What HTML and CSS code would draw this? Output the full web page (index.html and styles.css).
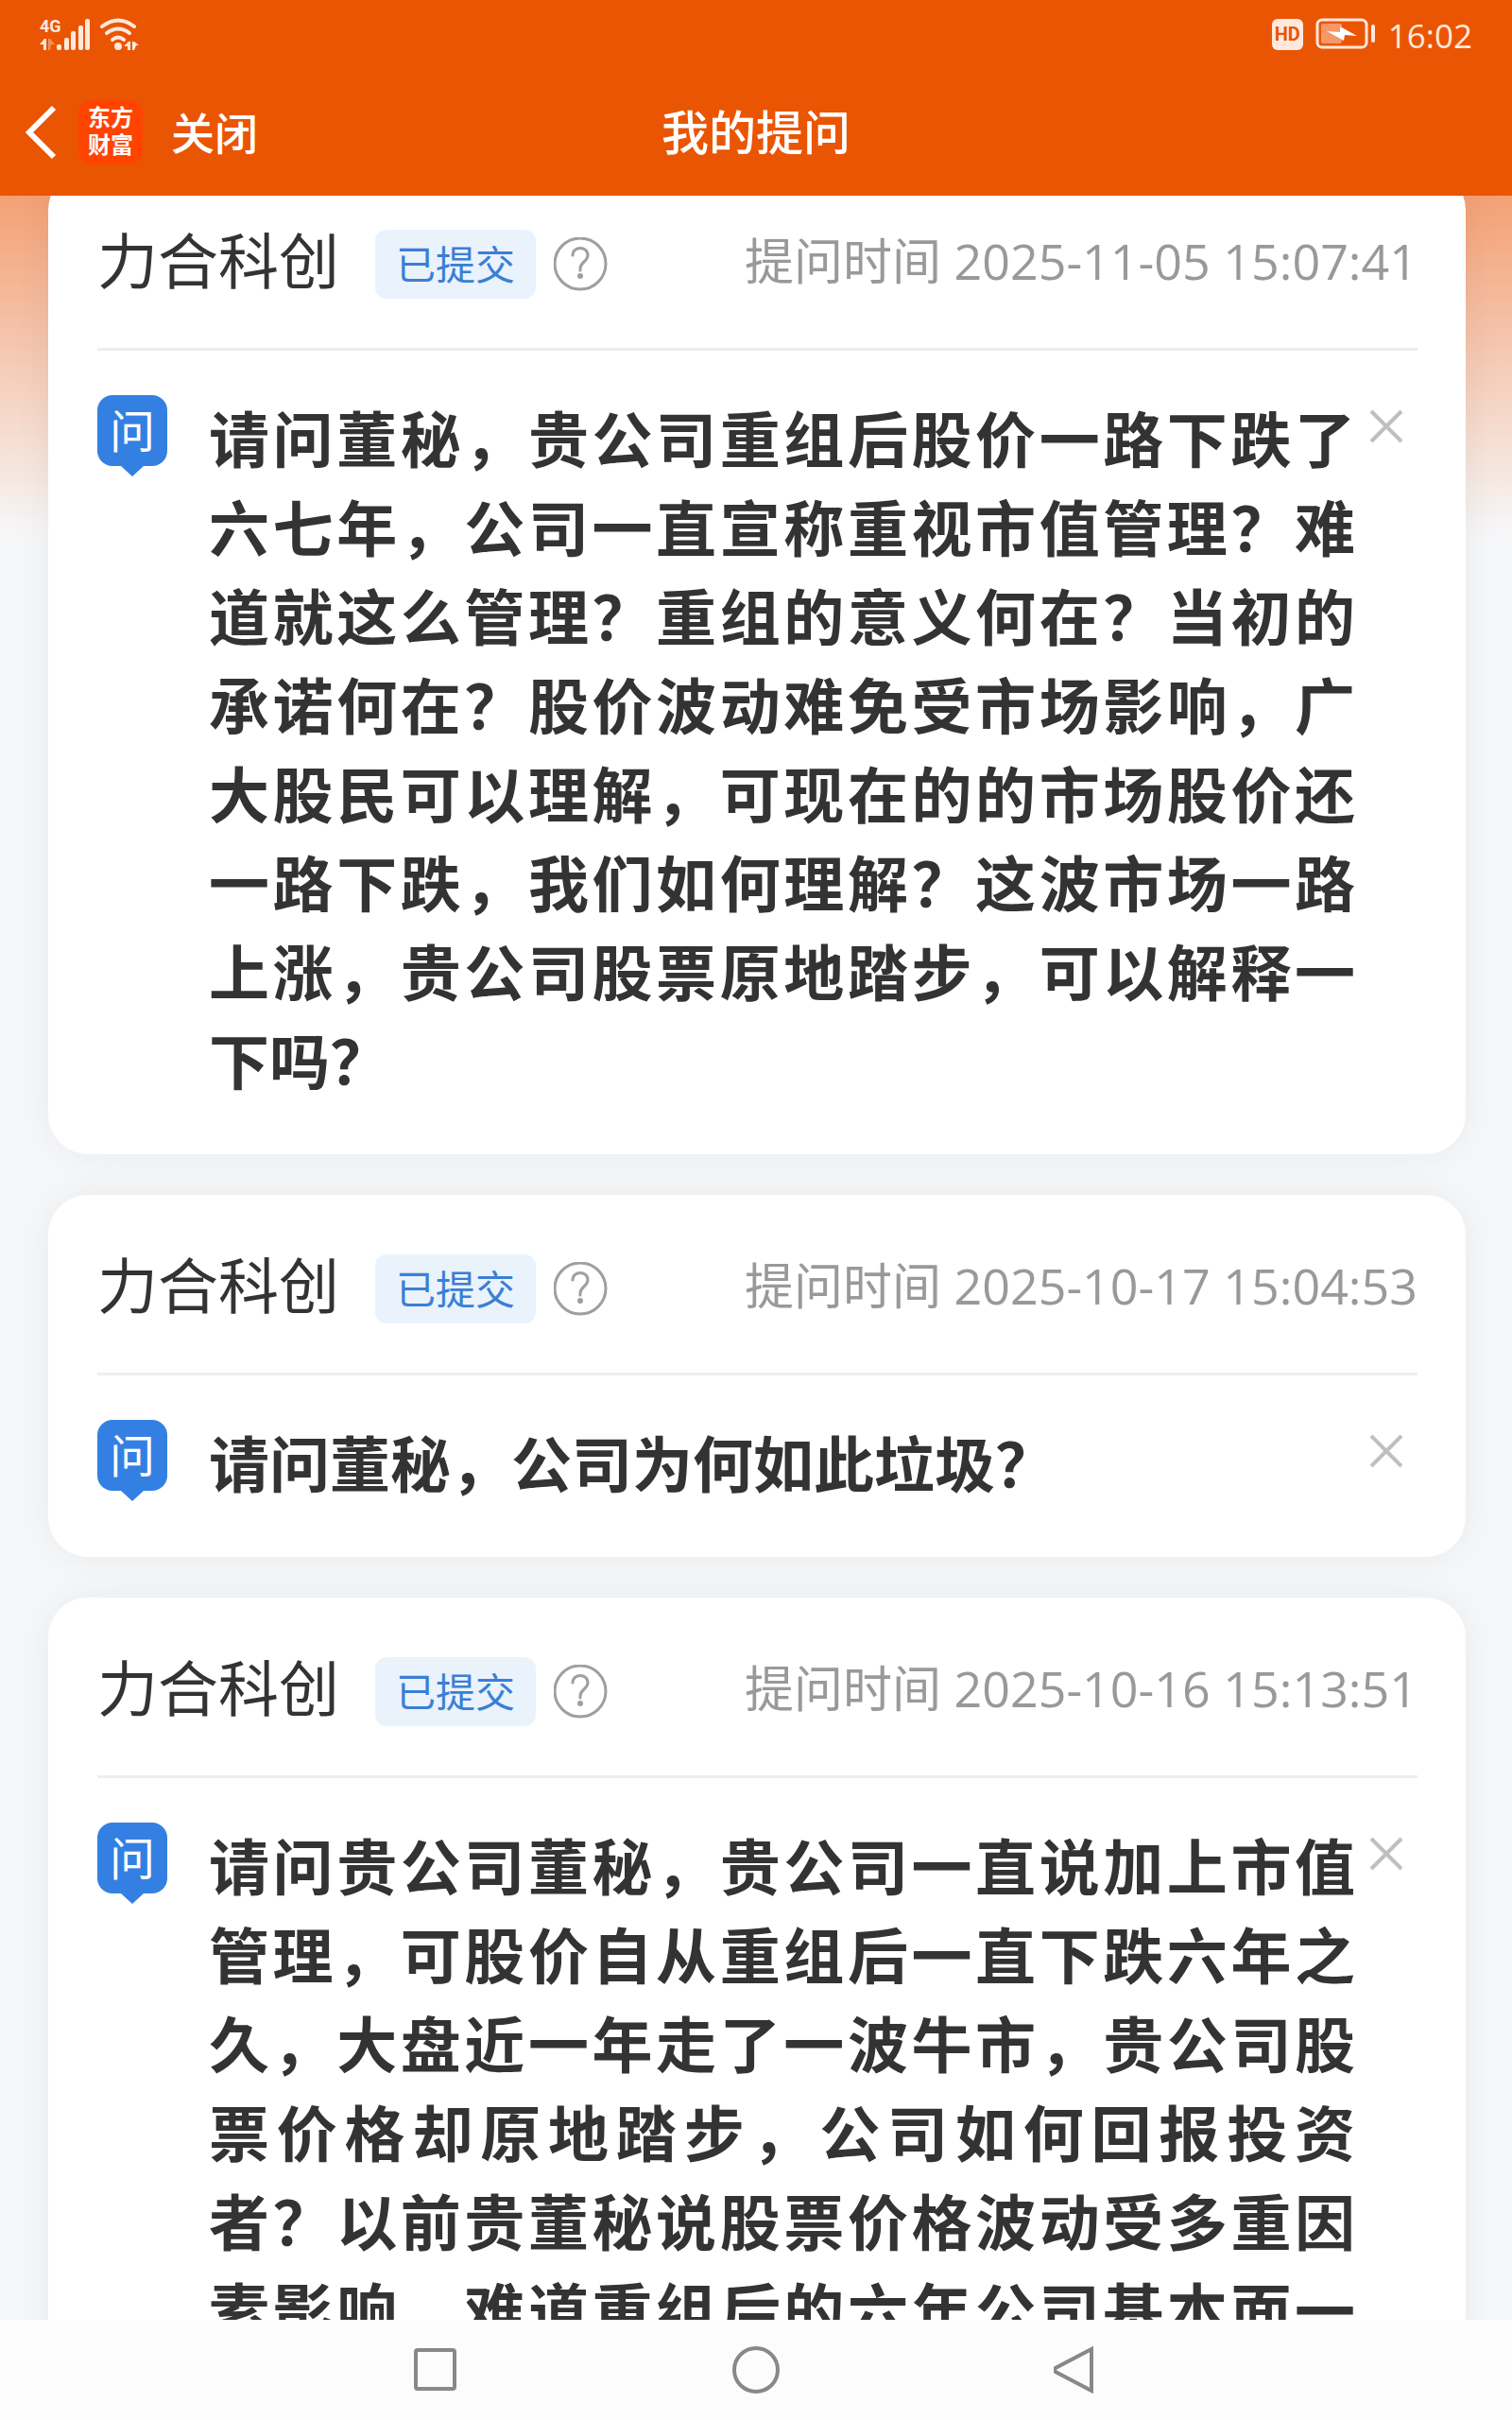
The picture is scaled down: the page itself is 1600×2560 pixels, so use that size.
FILE: index.html
```html
<!DOCTYPE html>
<html lang="zh-CN">
<head>
  <meta charset="UTF-8" />
  <meta name="viewport" content="width=device-width, initial-scale=1.0"/>
  <title>我的提问</title>
  <link rel="stylesheet" href="styles.css">
</head>
<body>
  <header class="topbar">
    <div class="status">
      <svg class="signal" width="106" height="44" viewBox="0 -6 106 44" fill="#ffe9dc">
        <text x="0" y="14" class="net">4G</text>
        <path d="M0 27l5-6h2v12H4v-6z"/>
        <path d="M9 21h2l5 6h-4l-1 6H9z" opacity=".4"/>
        <rect x="18" y="27" width="5" height="6" rx="2"/>
        <rect x="26" y="20" width="5" height="13" rx="2"/>
        <rect x="33" y="13" width="5" height="20" rx="2"/>
        <rect x="41" y="7" width="5" height="26" rx="2"/>
        <rect x="48" y="0" width="5" height="33" rx="2"/>
        <g fill="none" stroke="#ffe9dc" stroke-width="4" stroke-linecap="round">
          <path d="M66 8q17-13 34 0"/>
          <path d="M71 15q12-9 24 0"/>
          <path d="M77 22q6-5 12 0"/>
        </g>
        <circle cx="83" cy="29" r="4"/>
        <path d="M89 29l5-5h2v9h-3v-4zM98 24h2l5 4h-3l-2 5h-2z"/>
      </svg>
      <div class="status-right">
        <span class="hd">HD</span>
        <svg width="64" height="34" viewBox="0 0 64 34">
          <rect x="2" y="2" width="52" height="29" rx="5" fill="none" stroke="#ffe9dc" stroke-width="3"/>
          <rect x="6" y="6" width="22" height="21" rx="2" fill="#f59766"/>
          <path d="M12 14l14 1V9l18 10-13-1-1 6z" fill="#ffffff"/>
          <rect x="59" y="7" width="4" height="19" rx="2" fill="#ffe9dc"/>
        </svg>
        <span class="clock">16:02</span>
      </div>
    </div>
    <div class="nav">
      <div class="nav-left">
        <button class="back" aria-label="返回">
          <svg width="36" height="58" viewBox="0 0 36 58" fill="none" stroke="#fff" stroke-width="6">
            <path d="M31 3L5 29l26 26"/>
          </svg>
        </button>
        <span class="logo">东方<br>财富</span>
        <button class="close-page">关闭</button>
      </div>
      <h1>我的提问</h1>
    </div>
  </header>

  <main>
    <div class="list">
      <section class="card">
        <div class="card-head">
          <h2>力合科创</h2>
          <span class="badge">已提交</span>
          <button class="help" aria-label="说明"><svg viewBox="0 0 57 57"><use href="#i-help"/></svg></button>
          <time>提问时间 2025-11-05 15:07:41</time>
        </div>
        <div class="card-body">
          <span class="ask">问</span>
          <p>请问董秘，贵公司重组后股价一路下跌了六七年，公司一直宣称重视市值管理？难道就这么管理？重组的意义何在？当初的承诺何在？股价波动难免受市场影响，广大股民可以理解，可现在的的市场股价还一路下跌，我们如何理解？这波市场一路上涨，贵公司股票原地踏步，可以解释一下吗？</p>
          <button class="del" aria-label="删除"><svg viewBox="0 0 36 36"><use href="#i-del"/></svg></button>
        </div>
      </section>

      <section class="card">
        <div class="card-head">
          <h2>力合科创</h2>
          <span class="badge">已提交</span>
          <button class="help" aria-label="说明"><svg viewBox="0 0 57 57"><use href="#i-help"/></svg></button>
          <time>提问时间 2025-10-17 15:04:53</time>
        </div>
        <div class="card-body">
          <span class="ask">问</span>
          <p>请问董秘，公司为何如此垃圾？</p>
          <button class="del" aria-label="删除"><svg viewBox="0 0 36 36"><use href="#i-del"/></svg></button>
        </div>
      </section>

      <section class="card">
        <div class="card-head">
          <h2>力合科创</h2>
          <span class="badge">已提交</span>
          <button class="help" aria-label="说明"><svg viewBox="0 0 57 57"><use href="#i-help"/></svg></button>
          <time>提问时间 2025-10-16 15:13:51</time>
        </div>
        <div class="card-body">
          <span class="ask">问</span>
          <p>请问贵公司董秘，贵公司一直说加上市值管理，可股价自从重组后一直下跌六年之久，大盘近一年走了一波牛市，贵公司股票价格却原地踏步，公司如何回报投资者？以前贵董秘说股票价格波动受多重因素影响，难道重组后的六年公司基本面一直</p>
          <button class="del" aria-label="删除"><svg viewBox="0 0 36 36"><use href="#i-del"/></svg></button>
        </div>
      </section>
    </div>
  </main>

  <footer class="sysbar">
    <button aria-label="最近任务">
      <svg viewBox="0 0 50 50"><rect x="5" y="4" width="41" height="41" rx="2"/></svg>
    </button>
    <button aria-label="主页">
      <svg viewBox="0 0 50 50"><circle cx="25" cy="25" r="23"/></svg>
    </button>
    <button aria-label="返回">
      <svg viewBox="0 0 50 50"><path d="M40 3v44L2 27q-2-2 0-4z"/></svg>
    </button>
  </footer>

  <svg class="defs" aria-hidden="true">
    <symbol id="i-help" viewBox="0 0 57 57">
      <g fill="none" stroke="#9f9f9f" stroke-width="3">
        <circle cx="28" cy="28" r="27"/>
        <path d="M20 19c0-10 16-10 16 0 0 7-8 7-8 14v2" stroke-linecap="round"/>
      </g>
      <circle cx="28" cy="41" r="3" fill="#9f9f9f"/>
    </symbol>
    <symbol id="i-del" viewBox="0 0 36 36">
      <path d="M2 2l32 32M34 2L2 34" stroke="#bfbfbf" stroke-width="4"/>
    </symbol>
  </svg>
</body>
</html>
```
FILE: styles.css
```css
* {
  box-sizing: border-box;
}
body {
  margin: 0;
  height: 100vh;
  display: flex;
  flex-direction: column;
  overflow: hidden;
  background: #f6f7f9;
  color: #333;
  font-family: "Open Sans", "Noto Sans CJK SC", sans-serif;
}
button {
  padding: 0;
  border: 0;
  background: none;
  color: inherit;
  font: inherit;
  cursor: pointer;
}
svg {
  display: block;
}
h1, h2, p {
  margin: 0;
}
.defs {
  position: absolute;
  width: 0;
  height: 0;
}

/* 顶部 */
.topbar {
  flex: none;
  background: #ea5504;
  color: #fff;
}
.status {
  display: flex;
  align-items: center;
  justify-content: space-between;
  height: 72px;
  padding: 0 42px;
}
.net {
  font: bold 18px "Roboto", sans-serif;
}
.status-right {
  display: flex;
  align-items: center;
  gap: 13px;
  color: #ffe9dc;
}
.hd {
  width: 33px;
  height: 33px;
  border-radius: 6px;
  background: #ffe9dc;
  color: #ea5504;
  font: bold 20px/33px "Roboto", sans-serif;
  text-align: center;
}
.clock {
  padding-top: 3px;
  font-size: 35px;
  line-height: 36px;
}
.nav {
  display: grid;
  grid-template-columns: 1fr auto 1fr;
  align-items: center;
  height: 135px;
  padding: 0 26px;
}
.nav h1 {
  font-size: 50px;
  font-weight: 500;
  line-height: 64px;
}
.nav-left {
  display: flex;
  align-items: center;
}
.logo {
  width: 68px;
  height: 68px;
  margin: 0 30px 0 21px;
  padding-top: 3px;
  border-radius: 14px;
  background: #ff4400;
  font-size: 24px;
  font-weight: 700;
  line-height: 29px;
  text-align: center;
}
.close-page {
  font-size: 46px;
  font-weight: 500;
  line-height: 64px;
}

/* 提问列表 */
main {
  flex: 1;
  min-height: 0;
  overflow: hidden;
  background: linear-gradient(#f4a074, #f6f7f9 360px);
}
.list {
  display: flex;
  flex-direction: column;
  gap: 43px;
  margin-top: -27px;
  padding: 0 49px 0 51px;
}
.card {
  padding: 52px 51px 51px 52px;
  border-radius: 42px;
  background: #fff;
  box-shadow: 0 0 40px rgba(0, 0, 0, 0.06);
}
.card-head {
  display: flex;
  align-items: center;
  height: 139px;
  padding-bottom: 42px;
  border-bottom: 3px solid #eee;
}
.card-head h2,
.card-head time {
  padding-bottom: 7px;
  line-height: 87px;
}
.card-head h2 {
  margin-right: 38px;
  font-size: 64px;
  font-weight: 400;
}
.badge {
  margin-right: 19px;
  padding: 0 22px;
  border-radius: 12px;
  background: #eaf2fc;
  color: #3a7fd5;
  font-size: 42px;
  line-height: 73px;
}
.help {
  width: 57px;
  height: 57px;
}
.card-head time {
  margin-left: auto;
  color: #999;
  font-size: 52px;
}
.card-body {
  display: flex;
  align-items: flex-start;
  padding-top: 47px;
}
.ask {
  position: relative;
  flex: none;
  width: 74px;
  height: 75px;
  margin-right: 44px;
  border-radius: 16px;
  background: #3480e2;
  color: #fff;
  font-size: 48px;
  line-height: 75px;
  text-align: center;
}
.ask::after {
  content: "";
  position: absolute;
  left: 25px;
  top: 75px;
  border: 12px solid transparent;
  border-top: 11px solid #3480e2;
  border-bottom: 0;
}
.card-body p {
  flex: 1;
  font-size: 64px;
  font-weight: 700;
  line-height: 94px;
  text-align: justify;
}
.del {
  flex: none;
  width: 36px;
  height: 36px;
  margin: 15px 15px 0 15px;
}

/* 系统导航键 */
.sysbar {
  flex: none;
  display: flex;
  align-items: center;
  justify-content: center;
  gap: 290px;
  height: 106px;
  background: #fcfcfc;
}
.sysbar button {
  width: 50px;
  height: 50px;
}
.sysbar svg {
  fill: none;
  stroke: #888;
  stroke-width: 4px;
}
```
